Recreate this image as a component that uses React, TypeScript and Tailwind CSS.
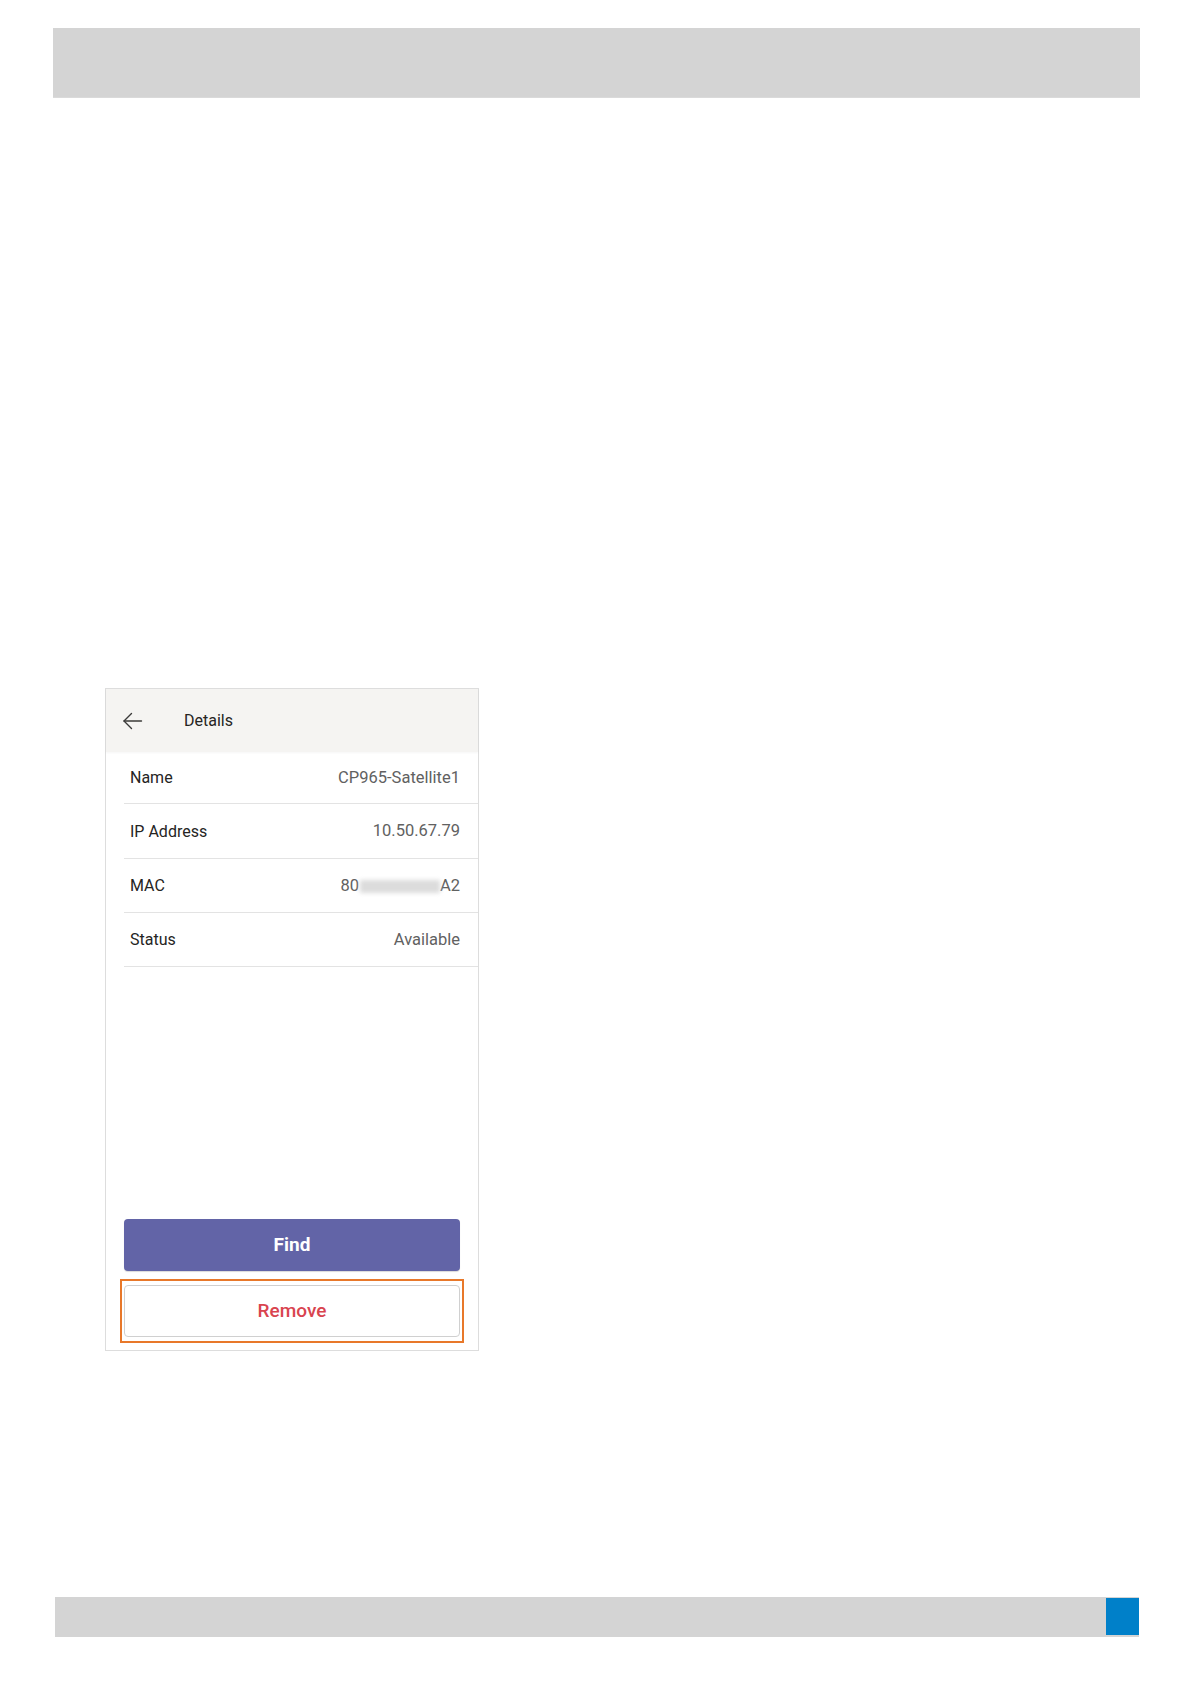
import React from "react";

const Row = ({ label, value, h }: { label: string; value: React.ReactNode; h: string }) => (
  <div>
    <div className={`flex items-center justify-between pl-[24px] pr-[18px] pt-[1px] ${h}`}>
      <span className="text-[16px] text-[#252423]">{label}</span>
      <span className="text-[16.5px] text-[#616161]">{value}</span>
    </div>
    <div className="ml-[18px] h-px bg-[#e3e3e3]" />
  </div>
);

export default function App() {
  return (
    <div className="w-[1190px] h-[1684px] bg-white overflow-hidden" style={{ fontFamily: "Roboto, 'Noto Sans', sans-serif" }}>
      <div className="ml-[53px] mt-[28px] w-[1087px] h-[70px] bg-[#d4d4d4] border-b border-[#dadada]" />

      <div className="ml-[105px] mt-[590px] w-[374px] h-[663px] border border-[#dddddd] flex flex-col">
        <div className="h-[63px] bg-[#f5f4f2] flex items-center shadow-[0_1px_2px_rgba(0,0,0,0.04)]">
          <svg className="ml-[16px]" width="21" height="18" viewBox="0 0 21 18" fill="none" stroke="#3b3a39" strokeWidth="1.4" strokeLinecap="round" strokeLinejoin="round">
            <path d="M2 9H19.5" />
            <path d="M9.5 1.5L2 9L9.5 16.5" />
          </svg>
          <span className="ml-[41px] text-[16px] text-[#252423] leading-none">Details</span>
        </div>
        <Row label="Name" value="CP965-Satellite1" h="h-[51px]" />
        <Row label="IP Address" value="10.50.67.79" h="h-[54px]" />
        <Row
          label="MAC"
          value={
            <span className="inline-flex items-center">
              <span>80</span>
              <span className="inline-flex items-center w-[80px] h-[16px] ml-[1px]">
                <span className="block w-[80px] h-[13px] bg-[#dcdcdc] blur-[2px]" />
              </span>
              <span>A2</span>
            </span>
          }
          h="h-[53px]"
        />
        <Row label="Status" value="Available" h="h-[53px]" />

        <div className="flex-1" />

        <div className="px-[18px]">
          <button className="w-full h-[52px] rounded-[4px] bg-[#6264a7] text-white text-[19px] font-bold shadow-[0_1px_1px_rgba(0,0,0,0.15)]">
            Find
          </button>
        </div>
        <div className="mx-[14px] mt-[8px] mb-[7px] border-2 border-[#e8782a] px-[2px] py-[4px]">
          <button className="w-full h-[52px] rounded-[4px] border border-[#d0d0d0] bg-white text-[#d9444f] text-[19px] font-medium">
            Remove
          </button>
        </div>
      </div>

      <div className="ml-[55px] mt-[246px] w-[1084px] h-[40px] bg-[#d4d4d4] flex justify-end">
        <div className="w-[33px] h-[37px] mt-[1px] bg-[#0080c9]" />
      </div>
    </div>
  );
}
